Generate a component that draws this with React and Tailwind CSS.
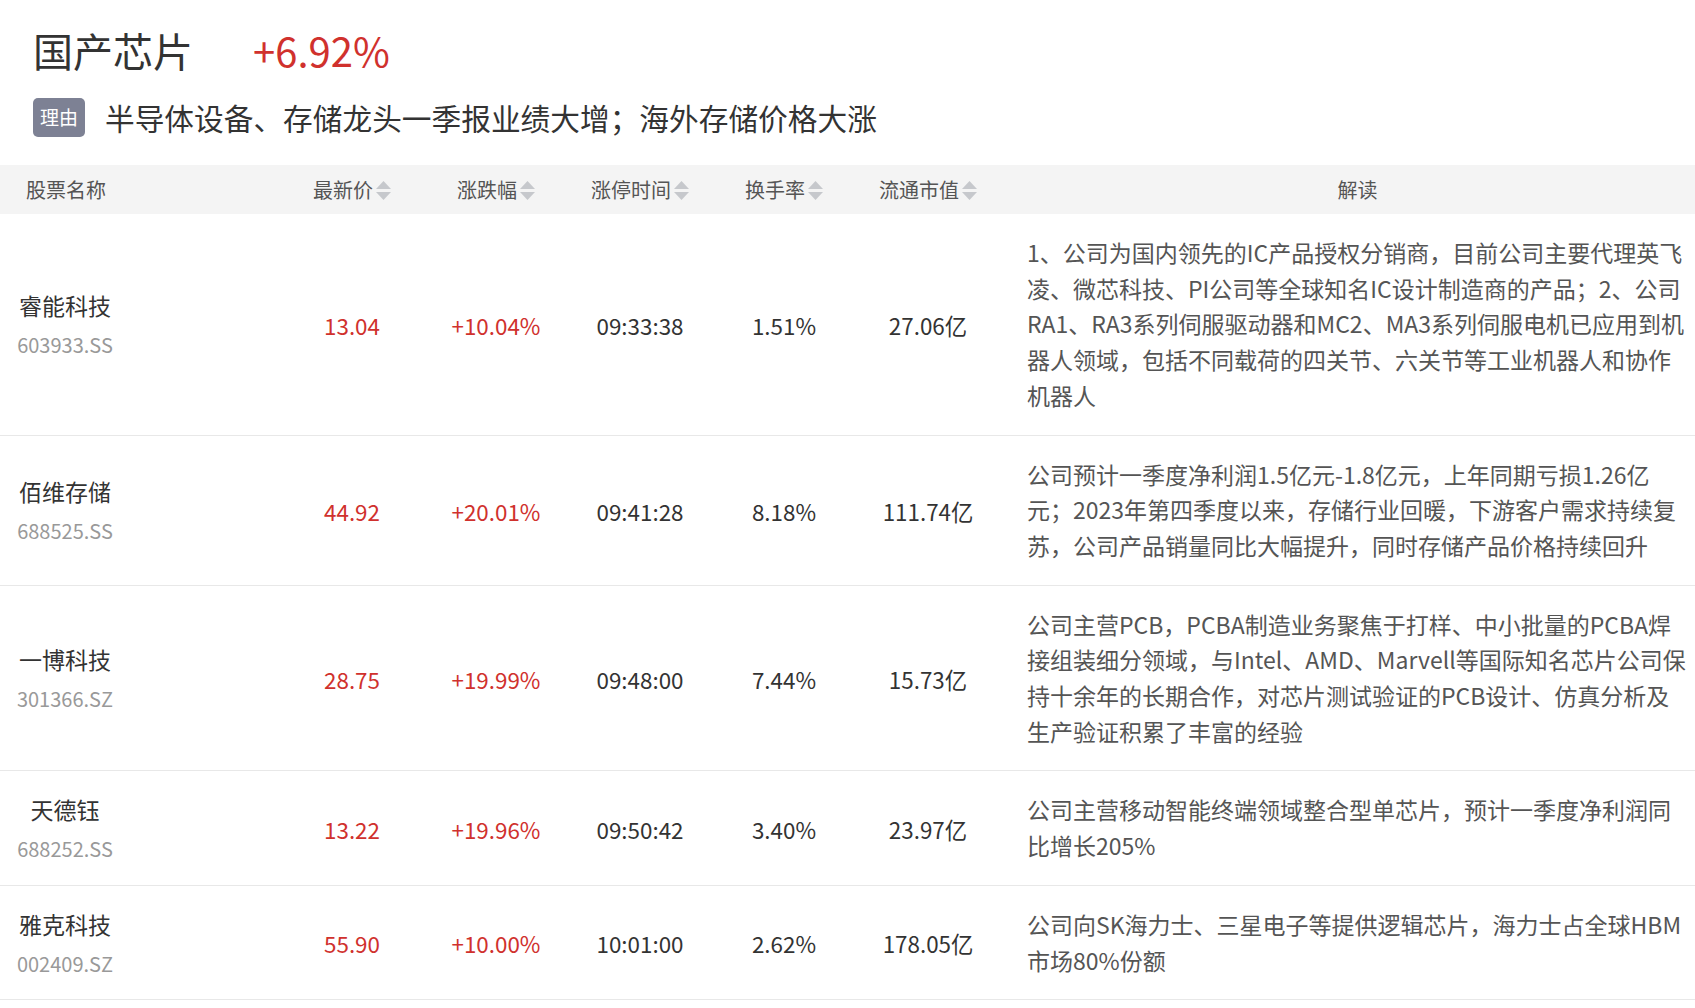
import React from "react";

const rows = [
  {
    name: "睿能科技",
    code: "603933.SS",
    price: "13.04",
    change: "+10.04%",
    time: "09:33:38",
    turnover: "1.51%",
    cap: "27.06亿",
    note: "1、公司为国内领先的IC产品授权分销商，目前公司主要代理英飞凌、微芯科技、PI公司等全球知名IC设计制造商的产品；2、公司RA1、RA3系列伺服驱动器和MC2、MA3系列伺服电机已应用到机器人领域，包括不同载荷的四关节、六关节等工业机器人和协作机器人",
  },
  {
    name: "佰维存储",
    code: "688525.SS",
    price: "44.92",
    change: "+20.01%",
    time: "09:41:28",
    turnover: "8.18%",
    cap: "111.74亿",
    note: "公司预计一季度净利润1.5亿元-1.8亿元，上年同期亏损1.26亿元；2023年第四季度以来，存储行业回暖，下游客户需求持续复苏，公司产品销量同比大幅提升，同时存储产品价格持续回升",
  },
  {
    name: "一博科技",
    code: "301366.SZ",
    price: "28.75",
    change: "+19.99%",
    time: "09:48:00",
    turnover: "7.44%",
    cap: "15.73亿",
    note: "公司主营PCB，PCBA制造业务聚焦于打样、中小批量的PCBA焊接组装细分领域，与Intel、AMD、Marvell等国际知名芯片公司保持十余年的长期合作，对芯片测试验证的PCB设计、仿真分析及生产验证积累了丰富的经验",
  },
  {
    name: "天德钰",
    code: "688252.SS",
    price: "13.22",
    change: "+19.96%",
    time: "09:50:42",
    turnover: "3.40%",
    cap: "23.97亿",
    note: "公司主营移动智能终端领域整合型单芯片，预计一季度净利润同比增长205%",
  },
  {
    name: "雅克科技",
    code: "002409.SZ",
    price: "55.90",
    change: "+10.00%",
    time: "10:01:00",
    turnover: "2.62%",
    cap: "178.05亿",
    note: "公司向SK海力士、三星电子等提供逻辑芯片，海力士占全球HBM市场80%份额",
  },
];

const sortable = ["最新价", "涨跌幅", "涨停时间", "换手率", "流通市值"];

function SortIcon() {
  return (
    <svg width="15" height="22" viewBox="0 0 15 22" className="ml-[3px]">
      <path d="M7.5 2 L15 10 L0 10 Z" fill="#c6c8cc" />
      <path d="M7.5 21 L15 13 L0 13 Z" fill="#c6c8cc" />
    </svg>
  );
}

export default function App() {
  return (
    <div
      className="w-[1695px] min-h-[1008px] bg-white text-[#333]"
      style={{ fontFamily: '"Noto Sans CJK SC", "Noto Sans", sans-serif' }}
    >
      <div className="px-[33px] pt-[25px]">
        <div className="flex items-center h-[50px]">
          <span className="text-[40px] leading-none text-[#333]">国产芯片</span>
          <span className="ml-[60px] text-[40px] leading-none text-[#d0312d]">+6.92%</span>
        </div>
        <div className="flex items-center mt-[23px]">
          <span className="w-[52px] h-[39px] rounded-[5px] bg-[#7d8194] text-white text-[19px] flex items-center justify-center">
            理由
          </span>
          <span className="ml-[20px] text-[29.7px] leading-none text-[#333]">
            半导体设备、存储龙头一季报业绩大增；海外存储价格大涨
          </span>
        </div>
      </div>

      <div className="mt-[28px]">
        <div className="flex h-[49px] items-center bg-[#f4f4f4] text-[20px] text-[#555]">
          <div className="w-[280px] pl-[26px]">股票名称</div>
          {sortable.map((h) => (
            <div key={h} className="w-[144px] flex items-center justify-center">
              <span>{h}</span>
              <SortIcon />
            </div>
          ))}
          <div className="flex-1 pl-[20px] text-center">解读</div>
        </div>

        {rows.map((r) => (
          <div key={r.code} className="flex items-center border-b border-[#e8e8e8]">
            <div className="w-[280px] flex pt-[2px]">
              <div className="ml-[15px] w-[100px] flex flex-col items-center">
                <span className="text-[23px] leading-[30px] text-[#333]">{r.name}</span>
                <span className="mt-[10px] text-[20px] leading-[30px] text-[#999]">{r.code}</span>
              </div>
            </div>
            <div className="w-[144px] pt-[3px] text-center text-[22.4px] text-[#d0312d]">{r.price}</div>
            <div className="w-[144px] pt-[3px] text-center text-[22.4px] text-[#d0312d]">{r.change}</div>
            <div className="w-[144px] pt-[3px] text-center text-[22.4px]">{r.time}</div>
            <div className="w-[144px] pt-[3px] text-center text-[22.4px]">{r.turnover}</div>
            <div className="w-[144px] pt-[3px] text-center text-[22.4px]">{r.cap}</div>
            <div className="flex-1 pl-[27px] pr-[6px] py-[21px] text-[23px] leading-[35.7px] text-[#555]">
              {r.note}
            </div>
          </div>
        ))}
      </div>
    </div>
  );
}
